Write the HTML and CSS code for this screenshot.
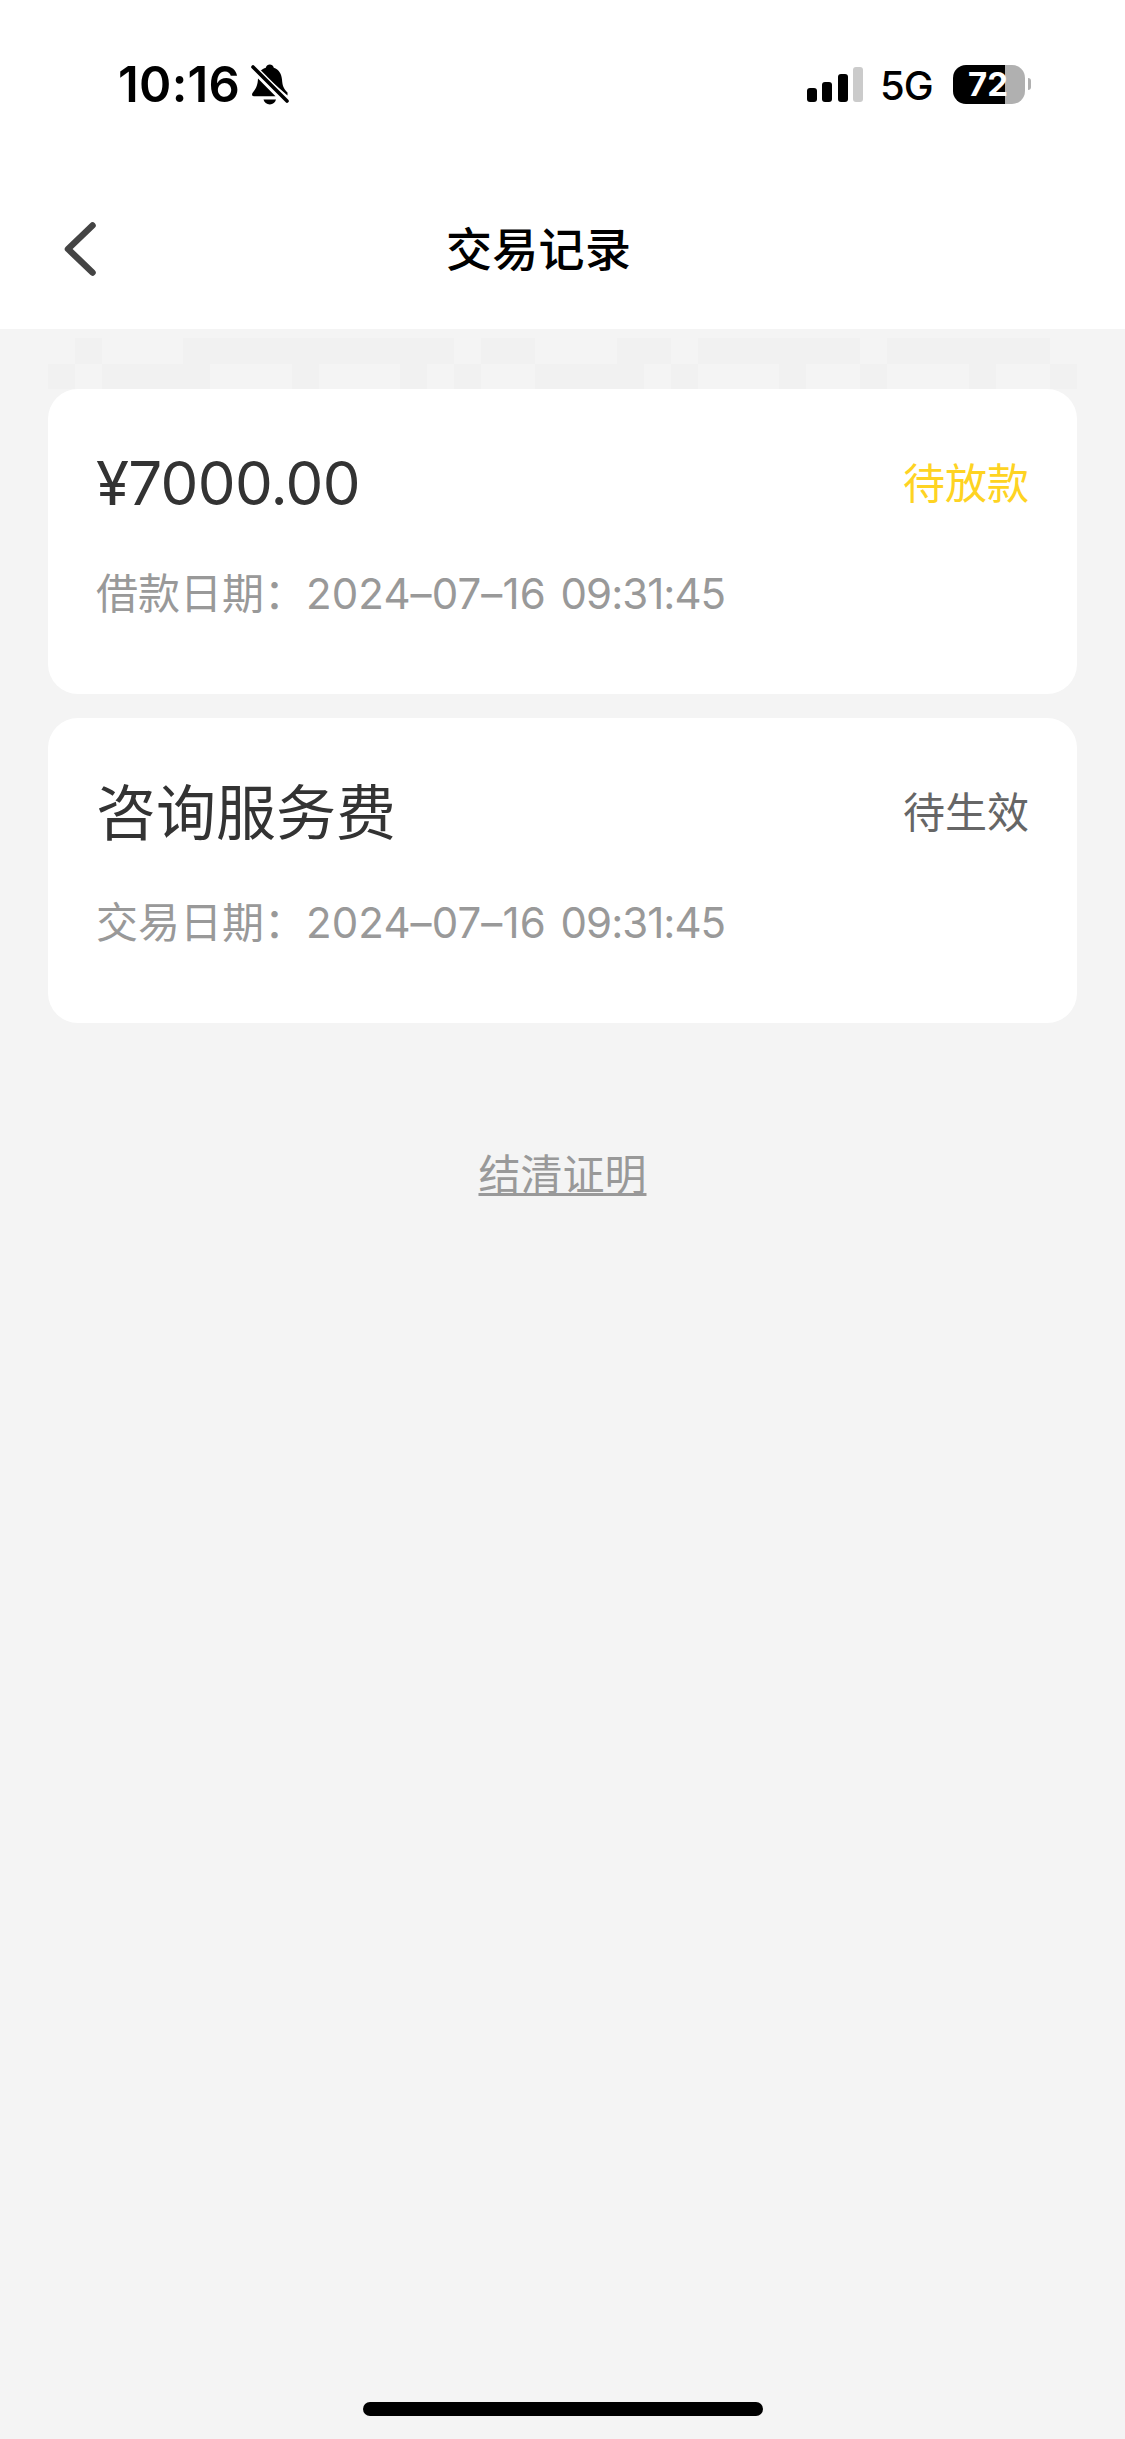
FILE: index.html
```html
<!DOCTYPE html>
<html lang="zh-CN">
<head>
  <meta charset="UTF-8">
  <title>交易记录</title>
  <link rel="stylesheet" href="styles.css">
</head>
<body>
  <div class="status-bar">
    <div class="status-left">
      <span class="time">10:16</span>
      <svg class="bell" width="38" height="42" viewBox="0 0 38 42">
        <path d="M9 8.500C11 6.200 13 5.200 14.800 4.800C15.400 2.300 17 1.500 18.800 1.500C20.600 1.500 22.200 2.300 22.800 4.800C28 6.500 30.500 11 31 16.500C31.400 22 32.200 25.500 36.500 29.500V32.500Z"/>
        <path d="M7 15.500L24.500 33.200H2.800C1 33.200 .6 31.500 1.500 30C5 25.500 6.600 23 7 15.500Z"/>
        <path d="M12.500 36.500H25C24.300 39.500 22 41.400 18.800 41.400C15.600 41.400 13.200 39.500 12.500 36.500Z"/>
        <path d="M2.500 4.500L36.500 38.500" fill="none" stroke="#fff" stroke-width="6.500"/>
        <path d="M2 4L36 38" fill="none" stroke="#000" stroke-width="3.600" stroke-linecap="round"/>
      </svg>
    </div>
    <div class="status-right">
      <div class="signal">
        <i class="bar bar1"></i>
        <i class="bar bar2"></i>
        <i class="bar bar3"></i>
        <i class="bar bar4"></i>
      </div>
      <span class="network">5G</span>
      <div class="battery">72</div>
      <i class="battery-tip"></i>
    </div>
  </div>

  <header>
    <svg class="back" width="34" height="56" viewBox="0 0 34 56">
      <path d="M29.500 4.500L5 28L29.500 51.500" fill="none" stroke="#444" stroke-width="6.500" stroke-linecap="round" stroke-linejoin="round"/>
    </svg>
    <h1>交易记录</h1>
  </header>

  <main class="container">
    <svg class="mosaic" width="1029" height="51" viewBox="0 0 38 2" preserveAspectRatio="none" shape-rendering="crispEdges">
      <path d="M1 0h1v1h-1zM5 0h10v1h-10zM16 0h2v1h-2zM21 0h2v1h-2zM24 0h6v1h-6zM31 0h6v1h-6z"/>
      <path d="M0 1h1v1h-1zM2 1h4v1h-4zM9 1h1v1h-1zM13 1h1v1h-1zM15 1h1v1h-1zM18 1h4v1h-4zM23 1h1v1h-1zM27 1h1v1h-1zM30 1h1v1h-1zM34 1h1v1h-1zM37 1h1v1h-1z"/>
    </svg>

    <div class="card">
      <div class="row">
        <span class="amount">¥7000.00</span>
        <span class="state pending">待放款</span>
      </div>
      <p class="date">借款日期：<span class="day">2024–07–16</span> <span class="clock">09:31:45</span></p>
    </div>

    <div class="card">
      <div class="row">
        <span class="name">咨询服务费</span>
        <span class="state">待生效</span>
      </div>
      <p class="date">交易日期：<span class="day">2024–07–16</span> <span class="clock">09:31:45</span></p>
    </div>

    <a class="proof">结清证明</a>
  </main>

  <div class="home-bar"></div>
</body>
</html>
```
FILE: styles.css
```css
* {
  box-sizing: border-box;
}
body {
  margin: 0;
  height: 2439px;
  display: flex;
  flex-direction: column;
  background-color: #f4f4f4;
  font-family: Inter, "Noto Sans CJK SC", sans-serif;
}
.status-bar {
  display: flex;
  justify-content: space-between;
  height: 168px;
  padding: 0 94px 0 118px;
  background-color: #fff;
}
.status-left,
.status-right {
  display: flex;
  align-items: center;
  height: 168px;
}
.time {
  width: 133px;
  font-size: 49px;
  font-weight: 600;
  letter-spacing: 0.3px;
}
.bell {
  margin-bottom: 1px;
}
.signal {
  display: flex;
  align-items: flex-end;
  gap: 5.3px;
  height: 35px;
  margin-right: 17px;
}
.bar {
  width: 10px;
  border-radius: 3px;
  background-color: #000;
}
.bar1 {
  height: 14px;
}
.bar2 {
  height: 20px;
}
.bar3 {
  height: 28px;
}
.bar4 {
  height: 35px;
  background-color: #cbcbcb;
}
.network {
  width: 73px;
  padding-top: 2px;
  font-size: 40px;
  font-weight: 450;
  letter-spacing: -1px;
}
.battery {
  width: 72px;
  height: 39px;
  padding-left: 15px;
  border-radius: 13px;
  background: linear-gradient(to right, #000 52px, #b0b0b0 52px);
  color: #fff;
  font-size: 33px;
  font-weight: 650;
  line-height: 39px;
}
.battery-tip {
  width: 3px;
  height: 12px;
  margin-left: 3px;
  border-radius: 0 5px 5px 0;
  background-color: #b0b0b0;
}
header {
  display: flex;
  align-items: center;
  height: 161px;
  padding: 0 0 0 63px;
  background-color: #fff;
}
h1 {
  margin: 0 0 0 349px;
  font-size: 46px;
  font-weight: 500;
  line-height: 60px;
  letter-spacing: 0.3px;
}
.container {
  flex: 1;
  display: flex;
  flex-direction: column;
  padding: 9px 48px 0;
}
.mosaic {
  display: block;
  fill: #f1f1f1;
}
.card {
  height: 305px;
  margin-bottom: 24px;
  padding: 57px 48px 0;
  border-radius: 30px;
  background-color: #fff;
}
.row {
  display: flex;
  justify-content: space-between;
  align-items: center;
  height: 74px;
}
.amount,
.name {
  color: #333;
  font-size: 60px;
}
.amount {
  letter-spacing: -0.7px;
}
.name {
  padding-bottom: 8px;
}
.state {
  padding-bottom: 6px;
  color: #666;
  font-size: 42px;
}
.pending {
  color: #fed322;
}
.date {
  margin: 44px 0 0;
  color: #999;
  font-size: 42px;
  line-height: 60px;
  white-space: nowrap;
  word-spacing: 3px;
}
.day {
  letter-spacing: 0.1px;
}
.clock {
  letter-spacing: -1px;
}
.proof {
  align-self: center;
  margin-top: 98px;
  color: #999;
  font-size: 42px;
  line-height: 60px;
  text-decoration: underline;
  text-decoration-thickness: 3px;
  text-decoration-skip-ink: none;
  text-underline-offset: 3px;
}
.home-bar {
  align-self: center;
  width: 400px;
  height: 14px;
  margin-bottom: 23px;
  border-radius: 7px;
  background-color: #000;
}
```
